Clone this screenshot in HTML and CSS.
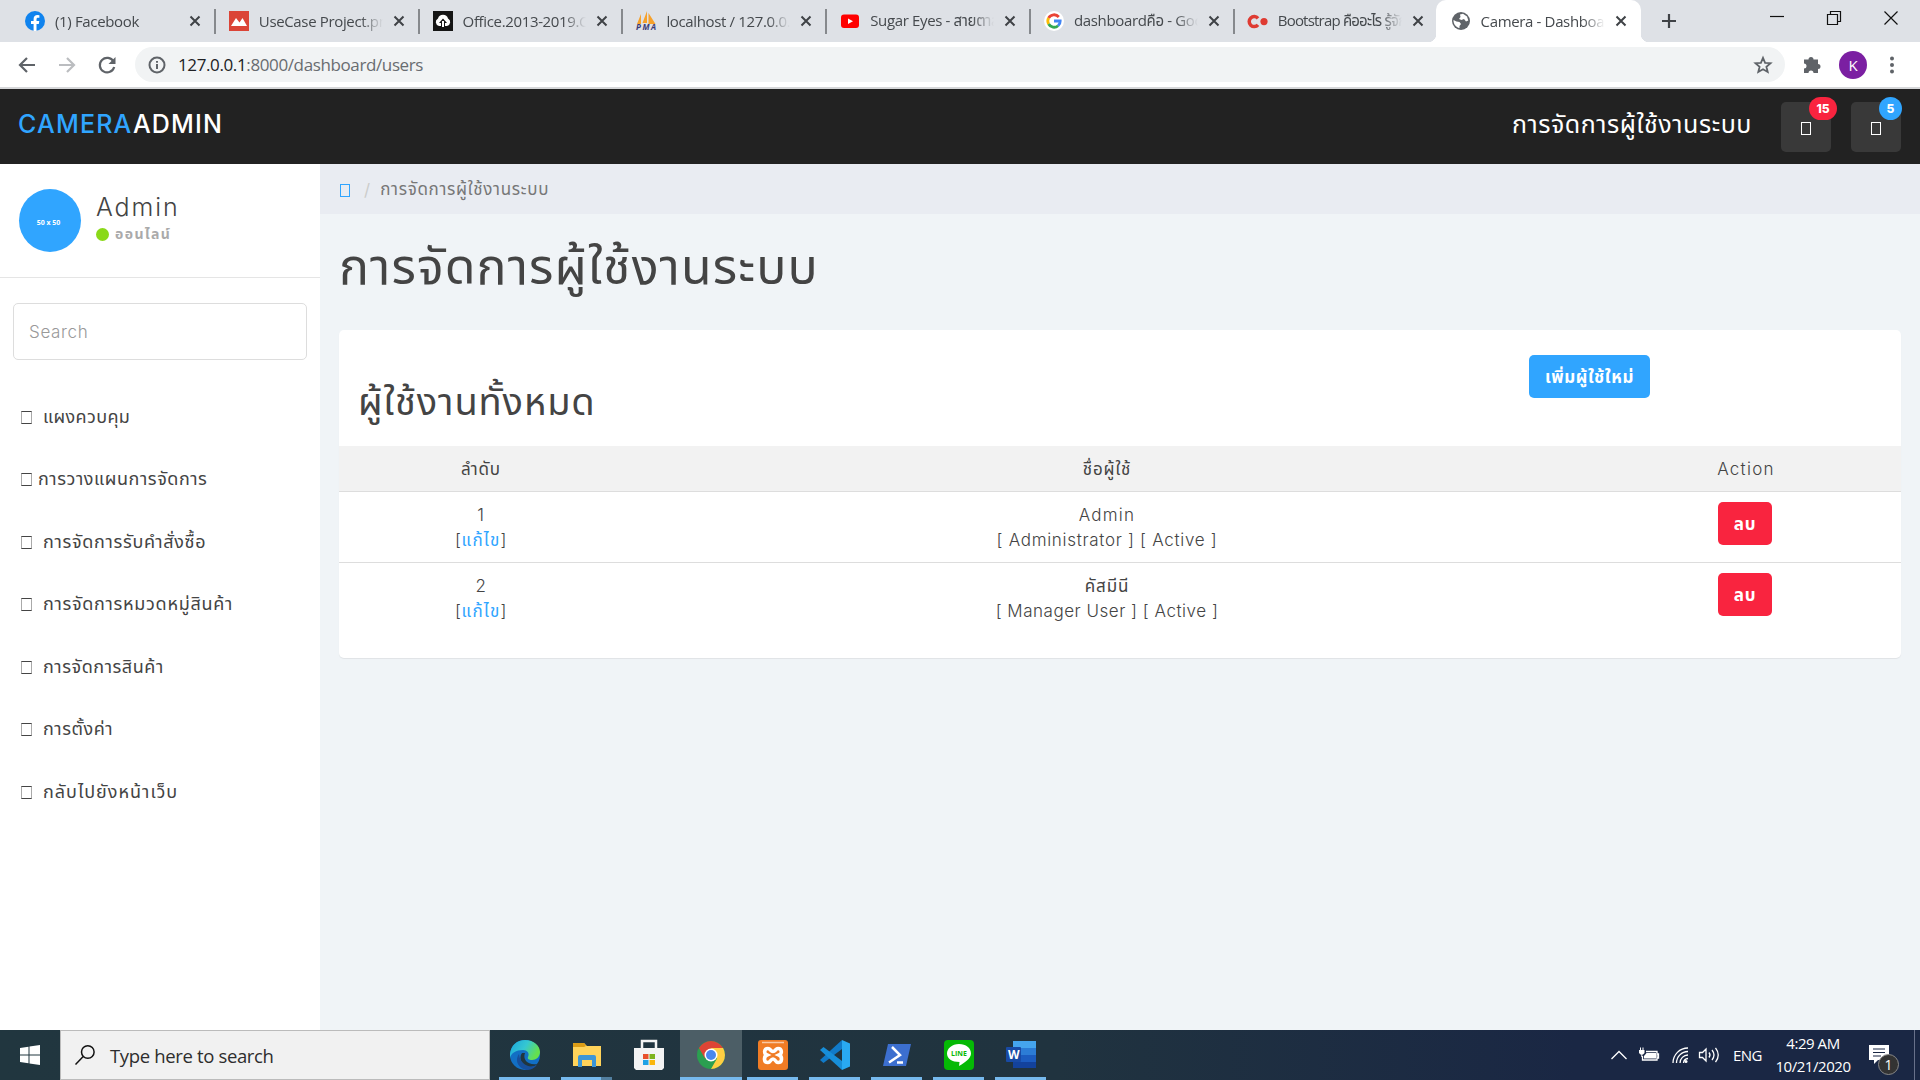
FILE: index.html
```html
<!DOCTYPE html>
<html lang="th">
<head>
<meta charset="utf-8">
<title>Camera - Dashboard</title>
<link rel="stylesheet" href="styles.css">
</head>
<body>
<div class="tabs">
  <div class="tab"><svg class="fav" viewBox="0 0 20 20"><circle cx="10" cy="10" r="10" fill="#1083ee"/><path d="M8.600 20v-7H6v-3h2.600V8c0-2.700 1.500-4 3.900-4l1.900.2v2.500h-1.300c-1.200 0-1.600.7-1.600 1.500V10h2.800l-.5 3h-2.300v7z" fill="#fff"/></svg><span class="tab-title">(1) Facebook</span><svg class="x" viewBox="0 0 12 12"><path d="M1.500 1.500l9 9M10.500 1.500l-9 9"/></svg></div>
  <div class="tab"><svg class="fav" viewBox="0 0 20 20"><path fill="#db4437" d="M0 0h20v20H0z"/><path d="M2 15l5-8 3.500 4.500L13.500 7l4.500 8z" fill="#fff"/></svg><span class="tab-title">UseCase Project.png</span><svg class="x" viewBox="0 0 12 12"><path d="M1.500 1.500l9 9M10.500 1.500l-9 9"/></svg></div>
  <div class="tab"><svg class="fav" viewBox="0 0 20 20"><path fill="#151515" d="M0 0h20v20H0z"/><path d="M6 15a4 4 0 0 1-1-7.500 5.200 5.200 0 0 1 10 0A4 4 0 0 1 14 15h-2v-3h2l-4-4.500L6 12h2v3z" fill="#fff"/><path d="M9 10h2v6H9z" fill="#fff"/></svg><span class="tab-title">Office.2013-2019.C2R</span><svg class="x" viewBox="0 0 12 12"><path d="M1.500 1.500l9 9M10.500 1.500l-9 9"/></svg></div>
  <div class="tab"><svg class="fav" viewBox="0 0 20 20"><path d="M5 3L1 13h4zM11 0L6.500 12H11zM12.500 2l7 11h-7z" fill="#f6a12b"/><text x="0" y="19" class="pma" textLength="20">PMA</text></svg><span class="tab-title">localhost / 127.0.0.1</span><svg class="x" viewBox="0 0 12 12"><path d="M1.500 1.500l9 9M10.500 1.500l-9 9"/></svg></div>
  <div class="tab"><svg class="fav" viewBox="0 0 20 20"><rect x="1" y="3.500" width="18" height="13.500" rx="3" fill="#f00"/><path d="M8 7.500l5 2.700-5 2.700z" fill="#fff"/></svg><span class="tab-title">Sugar Eyes - สายตาสั้น</span><svg class="x" viewBox="0 0 12 12"><path d="M1.500 1.500l9 9M10.500 1.500l-9 9"/></svg></div>
  <div class="tab"><svg class="fav" viewBox="0 0 20 20"><circle cx="10" cy="10" r="10" fill="#fff"/><g fill="none" stroke-width="2.800"><path d="M14.800 6A6.200 6.200 0 0 0 4.600 7" stroke="#ea4335"/><path d="M4.600 7a6.200 6.200 0 0 0 0 6" stroke="#fbbc05"/><path d="M4.600 13a6.200 6.200 0 0 0 9.500 1.700" stroke="#34a853"/><path d="M14.100 14.700A6 6 0 0 0 16.200 10H10" stroke="#4285f4"/></g></svg><span class="tab-title">dashboardคือ - Google</span><svg class="x" viewBox="0 0 12 12"><path d="M1.500 1.500l9 9M10.500 1.500l-9 9"/></svg></div>
  <div class="tab last"><svg class="fav" viewBox="0 0 20 20"><path d="M10 7.300a5 5 0 1 0 0 6.500" fill="none" stroke="#df3b32" stroke-width="3.500"/><circle cx="16" cy="10.600" r="3.600" fill="#df3b32"/></svg><span class="tab-title narrow">Bootstrap คืออะไร รู้จัก</span><svg class="x" viewBox="0 0 12 12"><path d="M1.500 1.500l9 9M10.500 1.500l-9 9"/></svg></div>
  <div class="tab active"><svg class="fav" viewBox="0 0 20 20"><circle cx="10" cy="10" r="9" fill="#5f6368"/><path d="M2.500 9l3 1.500 3 .5 1.500 2-1.500 2v2C5 16.500 2.300 13 2.500 9zM9 3.500l3-.8 4 2.800 1.300 4-2.300 1-2-2.500-2.500 1L8 8l1.500-2z" fill="#fff"/></svg><span class="tab-title">Camera - Dashboard</span><svg class="x" viewBox="0 0 12 12"><path d="M1.500 1.500l9 9M10.500 1.500l-9 9"/></svg></div>
  <svg class="plus" viewBox="0 0 16 16"><path d="M8 1v14M1 8h14"/></svg>
  <div class="window-buttons">
    <svg viewBox="0 0 14 14"><path d="M0 5.500h14"/></svg>
    <svg viewBox="0 0 14 14"><path d="M.5 3.500h10v10H.5zM3.500 3.500v-3h10v10h-3"/></svg>
    <svg viewBox="0 0 14 14"><path d="M.5 .5l13 13M13.500 .5l-13 13"/></svg>
  </div>
</div>
<div class="toolbar">
  <svg class="nav" viewBox="0 0 18 18"><path d="M17 9H2M9 2L2 9l7 7"/></svg>
  <svg class="nav off" viewBox="0 0 18 18"><path d="M1 9h15M9 2l7 7-7 7"/></svg>
  <svg class="nav" viewBox="0 0 18 18"><path d="M15.500 5.500A7.300 7.300 0 1 0 16.200 11"/><path d="M17.500 1v7h-7z" fill="#5f6368" stroke="none"/></svg>
  <div class="omnibox">
    <svg class="info" viewBox="0 0 18 18"><circle cx="9" cy="9" r="7.500"/><path d="M9 8v5M9 5v1.800"/></svg>
    <span class="url"><b>127.0.0.1</b>:8000/dashboard/users</span>
    <svg class="star" viewBox="0 0 18 18"><path d="M9 1.800l2.100 5 5.400.4-4.100 3.500 1.300 5.300L9 13.200 4.300 16l1.300-5.300-4.100-3.500 5.400-.4z"/></svg>
  </div>
  <svg class="puzzle" viewBox="0 0 19 19"><path d="M1 4.500h4.500a2.500 2.500 0 1 1 5 0H15V9a2.500 2.500 0 1 1 0 5v4h-4.500a2.500 2.500 0 0 0-5 0H1v-4.500a2.500 2.500 0 0 0 0-5z"/></svg>
  <span class="profile">K</span>
  <svg class="dots" viewBox="0 0 4 18"><circle cx="2" cy="2.500" r="2"/><circle cx="2" cy="9" r="2"/><circle cx="2" cy="15.500" r="2"/></svg>
</div>

<header class="navbar">
  <div class="brand"><span>CAMERA</span>ADMIN</div>
  <div class="navbar-title">การจัดการผู้ใช้งานระบบ</div>
  <div class="bell"><i class="tofu"></i><em class="badge red">15</em></div>
  <div class="bell"><i class="tofu"></i><em class="badge blue">5</em></div>
</header>

<div class="page">
  <aside class="sidebar">
    <div class="user">
      <div class="avatar">50 x 50</div>
      <div><div class="user-name">Admin</div><div class="status"><i></i><span>ออนไลน์</span></div></div>
    </div>
    <div class="search">Search</div>
    <nav class="menu">
      <a><i class="tofu"></i><span class="m1">แผงควบคุม</span></a>
      <a class="tight"><i class="tofu"></i><span class="m2">การวางแผนการจัดการ</span></a>
      <a><i class="tofu"></i><span class="m3">การจัดการรับคำสั่งซื้อ</span></a>
      <a><i class="tofu"></i><span class="m4">การจัดการหมวดหมู่สินค้า</span></a>
      <a><i class="tofu"></i><span class="m5">การจัดการสินค้า</span></a>
      <a><i class="tofu"></i><span class="m6">การตั้งค่า</span></a>
      <a><i class="tofu"></i><span class="m7">กลับไปยังหน้าเว็บ</span></a>
    </nav>
  </aside>
  <main class="main">
    <div class="breadcrumb"><i class="tofu"></i><span class="slash">/</span><span class="crumb">การจัดการผู้ใช้งานระบบ</span></div>
    <h1>การจัดการผู้ใช้งานระบบ</h1>
    <section class="card">
      <div class="card-head"><h2>ผู้ใช้งานทั้งหมด</h2><a class="btn add"><span>เพิ่มผู้ใช้ใหม่</span></a></div>
      <div class="row head"><div class="thai">ลำดับ</div><div class="thai">ชื่อผู้ใช้</div><div class="wide">Action</div></div>
      <div class="row"><div>1<br>[<a>แก้ไข</a>]</div><div><span class="wide">Admin</span><br>[ Administrator ] [ Active ]</div><div><a class="btn del">ลบ</a></div></div>
      <div class="row"><div>2<br>[<a>แก้ไข</a>]</div><div><span class="thai">คัสมีนี</span><br><span class="manager">[ Manager User ] [ Active ]</span></div><div><a class="btn del">ลบ</a></div></div>
    </section>
  </main>
</div>

<footer class="taskbar">
  <div class="start"><svg viewBox="0 0 20 20"><path d="M0 3l8.500-1.300v7.800H0zM9.500 1.500L20 0v9.500H9.500zM0 10.500h8.500v7.800L0 17zM9.500 10.500H20V20L9.500 18.500z" fill="#fff"/></svg></div>
  <div class="task-search"><svg viewBox="0 0 20 20"><circle cx="12.800" cy="7" r="6.300"/><path d="M8.200 11.600L.5 19.500"/></svg><span>Type here to search</span></div>
  <div class="apps">
    <div class="app open"><svg viewBox="0 0 30 30"><defs><linearGradient id="eg" x1="0" y1="0" x2="1" y2=".4"><stop offset="0" stop-color="#1aa5dc"/><stop offset=".55" stop-color="#35c7d2"/><stop offset="1" stop-color="#65e04d"/></linearGradient></defs><circle cx="15" cy="15" r="15" fill="#126fc4"/><path d="M0 14C1 5 7 0 15 0c9 0 15 6 15 12 0 5-4 8-8 8-3 0-5-1-4-3 2-4-1-7-5-7C6 10 1 13 0 18z" fill="url(#eg)"/><path d="M12 13c-4 5 0 14 8 14 3 0 6-1 7-3-5 1-9-1-11-3-2-3-2-5-1-8z" fill="#21363f"/><path d="M9 14c-5 7 0 15 8 16 5 0 8-3 10-5-8 4-17-1-18-11z" fill="#174f9c"/></svg></div>
    <div class="app open folder"><svg viewBox="0 0 30 30"><path d="M1 3h11l3 3h14v20H1z" fill="#ffd35a"/><path d="M1 3h11l2 3-2 1H1z" fill="#dc9d16"/><path d="M6 27V17q0-2 2-2h14q2 0 2 2v10h-4v-7H10v7z" fill="#3d96d6"/></svg></div>
    <div class="app"><svg viewBox="0 0 30 30"><path d="M8 8V1h14v7" fill="none" stroke="#f4f4f4" stroke-width="2.500"/><path d="M0 8h30v20l-2 2H2l-2-2z" fill="#f3f3f3"/><path d="M9 14h5.500v5H9z" fill="#e8502b"/><path d="M15.500 14H21v5h-5.500z" fill="#7eb31c"/><path d="M9 20h5.500v5H9z" fill="#1fa2e5"/><path d="M15.500 20H21v5h-5.500z" fill="#fab60c"/></svg></div>
    <div class="app open current"><svg viewBox="0 0 30 30"><circle cx="15" cy="15" r="14" fill="#2b9f50"/><path d="M2.900 8A14 14 0 0 1 27.100 8L15 8.500l-6 10z" fill="#dd4435"/><path d="M27.100 8A14 14 0 0 1 15 29l6-10.500L15 8z" fill="#ffce42"/><circle cx="15" cy="15" r="6.500" fill="#fff"/><circle cx="15" cy="15" r="5" fill="#4a87ee"/></svg></div>
    <div class="app open"><svg viewBox="0 0 30 30"><rect width="30" height="30" rx="3" fill="#f07c25"/><path d="M4 2.500h22" stroke="#f9c9a4" stroke-width="1.500"/><path d="M10 8.500c-4 0-4.500 5-1 6.500-3.500 1.500-3.500 7.500 1 7.500 2.500 0 2.500-3.500 5-3.500s2.500 3.500 5 3.500c4.500 0 4.500-6 1-7.500 3.500-1.500 3-6.500-1-6.500-2.500 0-2.500 3-5 3s-2.500-3-5-3z" fill="none" stroke="#fff" stroke-width="3.600"/></svg></div>
    <div class="app open"><svg viewBox="0 0 30 30"><path d="M22 0l8 3.500v23L22 30z" fill="#29a9f2"/><path d="M22 0v9L3.500 23 0 20z" fill="#117ac8"/><path d="M0 10l3.500-3L22 21v9z" fill="#178ed9"/></svg></div>
    <div class="app open"><svg viewBox="0 0 30 30"><path d="M6 4h23l-5 22H1z" fill="#3c6fcf"/><path d="M10 7l8 8-11 7.500M15 22.500h6" fill="none" stroke="#fff" stroke-width="2.500"/></svg></div>
    <div class="app open"><svg viewBox="0 0 30 30"><rect width="30" height="30" rx="4" fill="#05b905"/><path d="M15 4c7 0 12 4 12 9.500 0 5-6 9-12 12.500l.5-4C8 22 3 18.500 3 13.500S8 4 15 4z" fill="#fff"/><text x="7" y="16" class="line-word" textLength="16">LINE</text></svg></div>
    <div class="app open"><svg viewBox="0 0 30 30"><path d="M7 1h23v7H7z" fill="#45a5ee"/><path d="M7 8h23v7H7z" fill="#2c7cd6"/><path d="M7 15h23v7H7z" fill="#1c5cc0"/><path d="M7 22h23v6H7z" fill="#13429c"/><rect y="7" width="15" height="15" rx="1" fill="#184aa5"/><text x="2" y="19" class="word-w">W</text></svg></div>
  </div>
  <div class="tray">
    <svg class="chev" viewBox="0 0 16 10"><path d="M.5 9L8 1.500 15.500 9"/></svg>
    <svg class="batt" viewBox="0 0 20 16"><path d="M7 4.500h11v8.500H3.500V9M18.500 7h1v4h-1"/><path class="fill" d="M7.500 6H17v5.500H5V9z"/><path class="fill" d="M0 3h5.500v3L4 7.500H1.500L0 6zM1 .5h1V3H1zM3.500 .5h1V3h-1zM2.300 7h1v3h-1z"/></svg>
    <svg class="wifi" viewBox="0 0 16 16"><path d="M1 16A15 15 0 0 1 16 1M4.500 16A11.500 11.500 0 0 1 16 4.500M8 16a8 8 0 0 1 8-8M11.500 16a5 5 0 0 1 4.500-4.500"/><circle cx="14" cy="14.500" r="1.500" fill="#fff" stroke="none"/></svg>
    <svg class="vol" viewBox="0 0 21 16"><path d="M.5 5.500h3L7 2v12l-3.500-3.500h-3zM10 5.500q2 2.500 0 5M13 3q4 5 0 10M16.500.8q5.500 7.200 0 14.400"/></svg>
    <span class="lang">ENG</span>
    <div class="clock"><span class="time">4:29 AM</span><span class="date">10/21/2020</span></div>
    <div class="note"><svg viewBox="0 0 20 20"><path d="M0 0h20v15H9l-4 4v-4H0z" fill="#fff"/><path d="M4 4h12M4 7.500h12M4 11h8" stroke="#1a2744" stroke-width="1.200"/></svg><b>1</b></div>
  </div>
</footer>
</body>
</html>
```
FILE: styles.css
```css
* { box-sizing: border-box; }
body { margin: 0; width: 1920px; height: 1080px; overflow: hidden; display: flex; flex-direction: column; font-family: Inter, "Noto Sans Thai", sans-serif; font-weight: 300; font-size: 17px; color: #444; background: #f0f4f7; }
svg { flex: none; display: block; overflow: visible; }
i, em { font-style: normal; }
h1, h2 { margin: 0; font-weight: 400; white-space: nowrap; }

.tabs { height: 42px; flex: none; display: flex; background: #dee1e6; padding-left: 11px; font: 400 15px "Open Sans", "Noto Sans Thai", sans-serif; color: #45494d; }
.tab { width: 203.800px; height: 42px; display: flex; align-items: center; padding: 0 14px; position: relative; }
.tab::after { content: ""; position: absolute; right: -1px; top: 9px; width: 2px; height: 25px; background: #86898d; }
.tab.last::after, .tab.active::after { display: none; }
.fav { width: 20px; height: 20px; }
.tab-title { width: 124px; margin-left: 10px; white-space: nowrap; overflow: hidden; letter-spacing: -.35px; -webkit-mask-image: linear-gradient(90deg, #000 82%, transparent); mask-image: linear-gradient(90deg, #000 82%, transparent); }
.tab-title.narrow { letter-spacing: -.8px; }
.x { width: 12px; height: 12px; margin-left: 10px; fill: none; stroke: #3f4246; stroke-width: 2; }
.pma { font: italic 700 8px "Open Sans", sans-serif; fill: #3b3a76; }
.line-word { font: 700 7px "Open Sans", sans-serif; fill: #05b905; }
.word-w { font: 700 12px "Open Sans", sans-serif; fill: #fff; }
.tab.active { width: 205px; margin-left: -2px; padding-left: 15px; background: #fff; border-radius: 10px 10px 0 0; }
.tab.active::before { content: ""; position: absolute; left: -8px; right: -8px; bottom: 0; height: 8px; background: radial-gradient(circle at 0 0, transparent 8px, #fff 8.500px) 0 0 / 8px 8px no-repeat, radial-gradient(circle at 100% 0, transparent 8px, #fff 8.500px) 100% 0 / 8px 8px no-repeat; }
.plus { width: 16px; height: 16px; margin: 13px 0 0 20px; stroke: #3f4246; stroke-width: 2.200; fill: none; }
.window-buttons { margin-left: auto; padding: 11px 22px 0 0; display: flex; gap: 43px; }
.window-buttons svg { width: 14px; height: 14px; fill: none; stroke: #111; stroke-width: 1.200; }

.toolbar { height: 47px; flex: none; display: flex; align-items: center; background: #fff; border-bottom: 2px solid #d6d7d9; padding-left: 18px; }
.nav { width: 18px; height: 18px; margin-right: 22px; fill: none; stroke: #5f6368; stroke-width: 2.200; }
.nav.off { stroke: #bbbdc0; }
.nav:nth-child(3) { margin-right: 19px; }
.omnibox { width: 1650px; height: 35px; border-radius: 18px; background: #f1f3f4; display: flex; align-items: center; padding: 0 13px; }
.info { width: 18px; height: 18px; fill: none; stroke: #5f6368; stroke-width: 2; }
.url { margin-left: 12px; font: 400 17px "Open Sans", sans-serif; letter-spacing: -.38px; color: #686c70; }
.url b { font-weight: 400; color: #202124; }
.star { width: 18px; height: 18px; margin-left: auto; fill: none; stroke: #5f6368; stroke-width: 1.800; }
.puzzle { width: 19px; height: 19px; margin-left: 18px; fill: #5f6368; }
.profile { width: 28px; height: 28px; margin-left: 17px; border-radius: 50%; background: #7b1fa2; color: #fff; font: 400 15px/28px "Open Sans", sans-serif; text-align: center; }
.dots { width: 4px; height: 18px; margin-left: 23px; fill: #5f6368; }

.navbar { height: 75px; flex: none; background: #222; display: flex; align-items: flex-start; color: #fff; padding: 0 19px; }
.brand { font-size: 25px; line-height: 36px; font-weight: 450; margin-top: 17px; white-space: nowrap; letter-spacing: 1.200px; margin-left: -1px; }
.brand span { color: #30a5ff; }
.navbar-title { width: 240px; margin: 17px 29px 0 auto; font-size: 25px; line-height: 36px; font-weight: 400; white-space: nowrap; letter-spacing: .55px; }
.bell { width: 50px; height: 50px; margin-top: 13px; margin-left: 20px; border-radius: 5px; background: #393939; position: relative; display: flex; justify-content: center; padding-top: 20px; }
.navbar-title + .bell { margin-left: 0; }
.bell .tofu { color: #fff; width: 10px; height: 13px; }
.tofu { display: block; flex: none; width: 11px; height: 13px; border: 1px solid; }
.badge { position: absolute; top: -5px; height: 23px; border-radius: 12px; font: 800 12px/23px Inter, sans-serif; text-align: center; }
.badge.red { width: 28px; right: -6px; background: #f9243f; }
.badge.blue { width: 23px; right: -1px; background: #30a5ff; }

.page { height: 866px; flex: none; display: flex; }
.sidebar { width: 320px; background: #fff; }
.user { height: 114px; border-bottom: 1px solid #e5e5e5; display: flex; padding: 25px 0 0 19px; }
.avatar { width: 62px; height: 63px; margin-right: 15px; border-radius: 50%; background: #30a5ff; color: #fff; font: 700 7px/67px "Open Sans", sans-serif; text-align: center; padding-right: 3px; }
.user-name { font-size: 25px; line-height: 36px; letter-spacing: 1.900px; }
.status { display: flex; align-items: center; gap: 6px; color: #aaa; font-size: 14px; font-weight: 700; line-height: 22px; letter-spacing: 1.400px; margin-top: -2px; }
.status i { width: 13px; height: 13px; border-radius: 50%; background: #8ad919; }
.search { height: 57px; margin: 25px 13px 0; border: 1px solid #ddd; border-radius: 5px; padding-left: 15px; line-height: 56px; color: #999; letter-spacing: .65px; }
.menu { margin-top: 26px; font-size: 18px; }
.menu a { height: 62.500px; display: flex; align-items: center; gap: 11px; padding-left: 21px; white-space: nowrap; font-weight: 400; color: #444; }
.menu a.tight { gap: 6px; }
.menu .tofu { border-left-color: #aaa; border-right-color: #aaa; }
.m1 { letter-spacing: .35px; }
.m2, .m5, .m6 { letter-spacing: .55px; }
.m3, .m4 { letter-spacing: .7px; }
.m7 { letter-spacing: 1px; }
.main { width: 1600px; }
.breadcrumb { height: 50px; background: #e9ecf2; display: flex; align-items: center; padding: 2px 0 0 20px; color: #777; font-weight: 400; }
.breadcrumb .tofu { color: #30a5ff; width: 10px; margin-right: 1px; }
.slash { margin: 0 10px 0 13px; color: #ccc; }
.crumb { letter-spacing: .7px; }
h1 { height: 116px; padding-left: 19px; font-size: 50px; line-height: 105px; letter-spacing: 1.100px; }
.card { height: 328px; margin: 0 19px; background: #fff; border-radius: 5px; box-shadow: 0 1px 1px rgba(0,0,0,.07); }
.card-head { height: 116px; display: flex; justify-content: space-between; padding: 25px 251px 0 19px; }
h2 { font-size: 38px; line-height: 92px; letter-spacing: .9px; }
.btn { display: flex; align-items: center; justify-content: center; height: 43px; border-radius: 5px; color: #fff; font-weight: 700; white-space: nowrap; }
.add { width: 121px; background: #30a5ff; letter-spacing: .65px; padding-top: 2px; }
.row { height: 71px; border-bottom: 1px solid #ddd; display: grid; grid-template-columns: 284px 968px 310px; text-align: center; line-height: 25px; padding-top: 11px; letter-spacing: .7px; }
.row:last-child { border: 0; }
.row > div > a:not(.btn) { color: #30a5ff; font-weight: 400; letter-spacing: 1.200px; }
.row .wide { letter-spacing: 1.250px; }
.row .thai { font-weight: 400; letter-spacing: .9px; }
.row .manager { letter-spacing: .52px; }
.row.head { height: 46px; background: #f2f2f2; }
.row .del { width: 54px; margin: -1px auto 0 127px; padding-top: 2px; background: #f9243f; }

.taskbar { height: 50px; flex: none; display: flex; color: #fff; background: linear-gradient(90deg, #21363f 0, #20333f 55%, #1a2744 82%, #1a2744); font: 400 16px "Open Sans", sans-serif; }
.start { width: 60px; padding: 15px 20px; }
.start svg { width: 20px; height: 20px; }
.task-search { width: 430px; background: #f1f1f1; border: 1px solid #bbb; color: #2d2d2d; display: flex; align-items: center; gap: 15px; padding-left: 14px; font-size: 18.500px; letter-spacing: -.35px; }
.task-search svg { width: 20px; height: 20px; fill: none; stroke: #111; stroke-width: 1.500; }
.apps { display: flex; padding-left: 4px; }
.app { width: 62px; display: flex; justify-content: center; padding-top: 10px; position: relative; }
.app svg { width: 30px; height: 30px; }
.app.open::after { content: ""; position: absolute; left: 5px; right: 6px; bottom: 0; height: 3px; background: #76b9ed; }
.app.folder::after { background: linear-gradient(90deg, #76b9ed 79%, #527f9f 79%); }
.app.current { background: #4c5e66; }
.app.current::after { left: 0; right: 0; }
.tray { margin-left: auto; display: flex; align-items: center; border-right: 1px solid #68718a; margin-right: 5px; padding-right: 14px; }
.tray > svg { fill: none; stroke: #fff; stroke-width: 1.300; }
.tray .fill { fill: #fff; stroke: none; }
.chev { width: 16px; height: 10px; margin-right: 12px; }
.batt { width: 20px; height: 16px; margin-right: 13px; }
.wifi { width: 16px; height: 16px; margin-right: 11px; }
.vol { width: 21px; height: 16px; margin-right: 13px; }
.lang { width: 28px; font-size: 15px; letter-spacing: -.6px; }
.clock { width: 76px; margin: 0 18px 0 14px; text-align: center; font-size: 15px; line-height: 23px; letter-spacing: -.45px; display: flex; flex-direction: column; }
.note { width: 31px; height: 50px; padding-top: 15px; position: relative; }
.note svg { width: 20px; height: 20px; }
.note b { position: absolute; left: 9px; top: 24px; width: 21px; height: 21px; border: 1px solid #888; border-radius: 50%; background: #333; font: 400 14px/19px "Open Sans", sans-serif; text-align: center; }
```
